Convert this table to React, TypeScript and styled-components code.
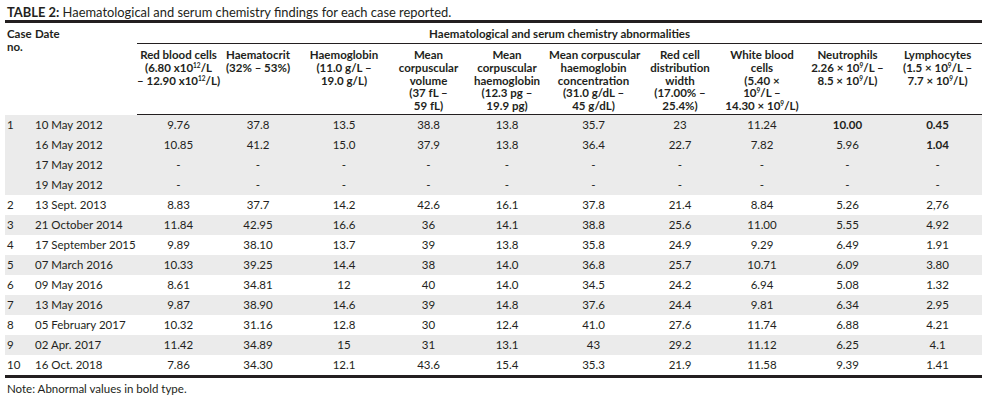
import React from "react";
import styled, { createGlobalStyle } from "styled-components";

const GlobalStyle = createGlobalStyle`
  html, body {
    margin: 0;
    padding: 0;
    background: #ffffff;
  }
  body {
    font-family: Lato, "Open Sans", "Liberation Sans", sans-serif;
    color: #231f20;
  }
`;

const Page = styled.div`
  width: 977px;
  margin-left: 5px;
  padding-top: 5px;
`;

const Caption = styled.div`
  font-size: 12.9px;
  line-height: 15px;
  padding: 0 0 0 2px;
  border-bottom: 3px solid #231f20;
  white-space: nowrap;
`;

const CaptionLabel = styled.span`
  font-weight: 700;
`;

const Table = styled.table`
  width: 977px;
  table-layout: fixed;
  border-collapse: collapse;
  font-size: 11.5px;
`;

const HeadCell = styled.th<{ $align?: "left" | "center" }>`
  text-align: ${(p) => p.$align ?? "center"};
  vertical-align: top;
  font-weight: 700;
  line-height: 13px;
  padding: 4px 2px 0 2px;
  white-space: nowrap;
`;

const GroupHeadCell = styled.th`
  text-align: center;
  font-weight: 700;
  line-height: 13px;
  height: 20px;
  padding: 4px 0 3px 0;
  border-bottom: 1px solid #231f20;
  box-sizing: border-box;
`;

const SubHeadCell = styled.th`
  text-align: center;
  vertical-align: top;
  font-weight: 700;
  line-height: 12.75px;
  height: 71px;
  box-sizing: border-box;
  padding: 5px 0 0 0;
  white-space: nowrap;
  border-bottom: 1.5px solid #231f20;
`;

const Sup = styled.sup`
  font-size: 6.5px;
  line-height: 0;
  vertical-align: 4px;
`;

const Body = styled.tbody`
  border-bottom: 3px solid #231f20;
`;

const Row = styled.tr<{ $shaded: boolean }>`
  height: 20px;
  background: ${(p) => (p.$shaded ? "#ebebeb" : "#ffffff")};
`;

const Cell = styled.td<{ $align?: "left" | "center"; $bold?: boolean }>`
  text-align: ${(p) => p.$align ?? "center"};
  font-weight: ${(p) => (p.$bold ? 700 : 400)};
  padding: 0 2px;
  height: 20px;
  line-height: 20px;
  white-space: nowrap;
`;

const Note = styled.div`
  font-size: 11.5px;
  line-height: 14px;
  padding: 4px 0 0 2px;
`;

const colWidths = [28, 104, 83, 76, 96, 73, 84, 89, 84, 80, 91, 89];

const nine = (
  <>
    10<Sup>9</Sup>/L
  </>
);

const headers: React.ReactNode[] = [
  <>
    Red blood cells
    <br />
    (6.80 x10<Sup>12</Sup>/L
    <br />– 12.90 x10<Sup>12</Sup>/L)
  </>,
  <>
    Haematocrit
    <br />
    (32% – 53%)
  </>,
  <>
    Haemoglobin
    <br />
    (11.0 g/L –
    <br />
    19.0 g/L)
  </>,
  <>
    Mean
    <br />
    corpuscular
    <br />
    volume
    <br />
    (37 fL –
    <br />
    59 fL)
  </>,
  <>
    Mean
    <br />
    corpuscular
    <br />
    haemoglobin
    <br />
    (12.3 pg –
    <br />
    19.9 pg)
  </>,
  <>
    Mean corpuscular
    <br />
    haemoglobin
    <br />
    concentration
    <br />
    (31.0 g/dL –
    <br />
    45 g/dL)
  </>,
  <>
    Red cell
    <br />
    distribution
    <br />
    width
    <br />
    (17.00% –
    <br />
    25.4%)
  </>,
  <>
    White blood
    <br />
    cells
    <br />
    (5.40 ×
    <br />
    {nine} –
    <br />
    14.30 × {nine})
  </>,
  <>
    Neutrophils
    <br />
    2.26 × {nine} –
    <br />
    8.5 × {nine})
  </>,
  <>
    Lymphocytes
    <br />
    (1.5 × {nine} –
    <br />
    7.7 × {nine})
  </>,
];

type Visit = {
  caseNo: string;
  date: string;
  values: string[];
  bold?: number[];
  shaded: boolean;
};

const dash = Array(10).fill("-");

const visits: Visit[] = [
  { caseNo: "1", date: "10 May 2012", values: ["9.76", "37.8", "13.5", "38.8", "13.8", "35.7", "23", "11.24", "10.00", "0.45"], bold: [8, 9], shaded: true },
  { caseNo: "", date: "16 May 2012", values: ["10.85", "41.2", "15.0", "37.9", "13.8", "36.4", "22.7", "7.82", "5.96", "1.04"], bold: [9], shaded: true },
  { caseNo: "", date: "17 May 2012", values: dash, shaded: true },
  { caseNo: "", date: "19 May 2012", values: dash, shaded: true },
  { caseNo: "2", date: "13 Sept. 2013", values: ["8.83", "37.7", "14.2", "42.6", "16.1", "37.8", "21.4", "8.84", "5.26", "2,76"], shaded: false },
  { caseNo: "3", date: "21 October 2014", values: ["11.84", "42.95", "16.6", "36", "14.1", "38.8", "25.6", "11.00", "5.55", "4.92"], shaded: true },
  { caseNo: "4", date: "17 September 2015", values: ["9.89", "38.10", "13.7", "39", "13.8", "35.8", "24.9", "9.29", "6.49", "1.91"], shaded: false },
  { caseNo: "5", date: "07 March 2016", values: ["10.33", "39.25", "14.4", "38", "14.0", "36.8", "25.7", "10.71", "6.09", "3.80"], shaded: true },
  { caseNo: "6", date: "09 May 2016", values: ["8.61", "34.81", "12", "40", "14.0", "34.5", "24.2", "6.94", "5.08", "1.32"], shaded: false },
  { caseNo: "7", date: "13 May 2016", values: ["9.87", "38.90", "14.6", "39", "14.8", "37.6", "24.4", "9.81", "6.34", "2.95"], shaded: true },
  { caseNo: "8", date: "05 February 2017", values: ["10.32", "31.16", "12.8", "30", "12.4", "41.0", "27.6", "11.74", "6.88", "4.21"], shaded: false },
  { caseNo: "9", date: "02 Apr. 2017", values: ["11.42", "34.89", "15", "31", "13.1", "43", "29.2", "11.12", "6.25", "4.1"], shaded: true },
  { caseNo: "10", date: "16 Oct. 2018", values: ["7.86", "34.30", "12.1", "43.6", "15.4", "35.3", "21.9", "11.58", "9.39", "1.41"], shaded: false },
];

export default function App() {
  return (
    <>
      <GlobalStyle />
      <Page>
        <Caption>
          <CaptionLabel>TABLE 2:</CaptionLabel> Haematological and serum chemistry findings for each case reported.
        </Caption>
        <Table>
          <colgroup>
            {colWidths.map((w, i) => (
              <col key={i} style={{ width: w }} />
            ))}
          </colgroup>
          <thead>
            <tr>
              <HeadCell $align="left" rowSpan={2}>
                Case
                <br />
                no.
              </HeadCell>
              <HeadCell $align="left" rowSpan={2}>
                Date
              </HeadCell>
              <GroupHeadCell colSpan={10}>Haematological and serum chemistry abnormalities</GroupHeadCell>
            </tr>
            <tr>
              {headers.map((h, i) => (
                <SubHeadCell key={i}>{h}</SubHeadCell>
              ))}
            </tr>
          </thead>
          <Body>
            {visits.map((v, i) => (
              <Row key={i} $shaded={v.shaded}>
                <Cell $align="left">{v.caseNo}</Cell>
                <Cell $align="left">{v.date}</Cell>
                {v.values.map((val, j) => (
                  <Cell key={j} $bold={v.bold?.includes(j)}>
                    {val}
                  </Cell>
                ))}
              </Row>
            ))}
          </Body>
        </Table>
        <Note>Note: Abnormal values in bold type.</Note>
      </Page>
    </>
  );
}
